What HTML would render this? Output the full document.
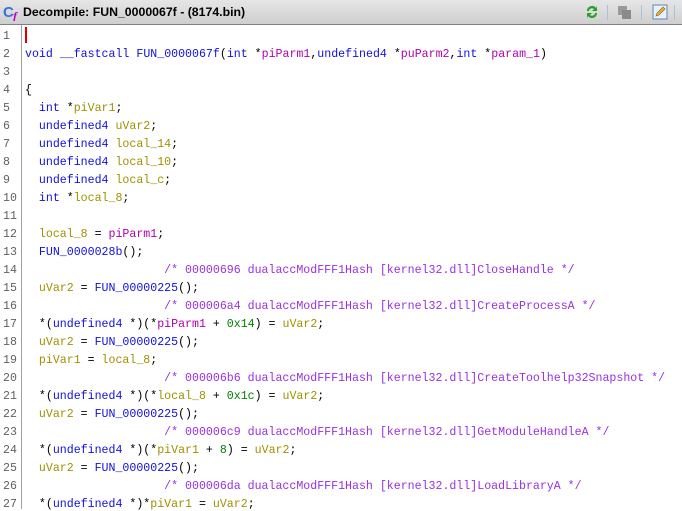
<!DOCTYPE html>
<html><head><meta charset="utf-8"><style>
html,body{margin:0;padding:0;width:682px;height:509px;overflow:hidden;background:#fff;font-family:"Liberation Sans",sans-serif}
.hdr{position:absolute;left:0;top:0;width:682px;height:24px;background:linear-gradient(#e6e6e6,#cfcfcf);border-bottom:1px solid #808080}
.ttl{position:absolute;left:23px;top:5px;font-size:12.3px;font-weight:bold;color:#000}
.gut{position:absolute;left:0;top:25px;width:21px;height:484px;border-right:1px solid #a0a0a0;background:#fff}
.ln{position:absolute;left:0;width:21px;font:11.6px "Liberation Mono",monospace;color:#606060;text-align:left;padding-left:3px;box-sizing:border-box}
.code{position:absolute;left:25px;font:11.6px "Liberation Mono",monospace;white-space:pre;color:#000}
.k{color:#1010e0}.f{color:#1010e0}.v{color:#a09000}.p{color:#b000b0}.n{color:#008000}.c{color:#9a30e0}
.sep{position:absolute;top:5px;width:1px;height:15px;background:#a9c0d6}
</style></head><body>
<div class="hdr">
<svg style="position:absolute;left:3px;top:3px" width="18" height="18" viewBox="0 0 18 18"><text x="0" y="14" font-family="Liberation Sans" font-weight="bold" font-size="15" fill="#3a6fe0">C</text><text x="10" y="17" font-family="Liberation Serif" font-style="italic" font-weight="bold" font-size="12" fill="#c000c0">f</text></svg>
<div class="ttl">Decompile: FUN_0000067f -  (8174.bin)</div>
<svg style="position:absolute;left:584px;top:4px" width="16" height="16" viewBox="0 0 16 16"><path d="M3 7a5 5 0 0 1 9-3l1-2v5h-5l2-2a3 3 0 0 0-5 2z" fill="#2aa02a"/><path d="M13 9a5 5 0 0 1-9 3l-1 2V9h5l-2 2a3 3 0 0 0 5-2z" fill="#2aa02a"/></svg>
<div class="sep" style="left:607px"></div>
<svg style="position:absolute;left:617px;top:5px" width="16" height="15"><rect x="1" y="1" width="9" height="9" fill="#9a9a9a"/><rect x="5" y="5" width="9" height="9" fill="#8a8a8a"/></svg>
<div class="sep" style="left:641px"></div>
<svg style="position:absolute;left:652px;top:4px" width="16" height="16"><rect x="1" y="1" width="14" height="14" fill="#e8f0fa" stroke="#5a88c0"/><path d="M4 12l1-3 6-6 2 2-6 6z" fill="#f0b030" stroke="#806020" stroke-width=".6"/></svg>
<div class="sep" style="left:674px"></div>
</div>
<div class="gut"></div>
<div style="position:absolute;left:25px;top:27px;width:2px;height:16px;background:#e00000"></div>
<div id="L"></div>
<script>
var lines=[
'',
'<span class="k">void</span> <span class="k">__fastcall</span> <span class="f">FUN_0000067f</span>(<span class="k">int</span> *<span class="p">piParm1</span>,<span class="k">undefined4</span> *<span class="p">puParm2</span>,<span class="k">int</span> *<span class="p">param_1</span>)',
'',
'{',
'  <span class="k">int</span> *<span class="v">piVar1</span>;',
'  <span class="k">undefined4</span> <span class="v">uVar2</span>;',
'  <span class="k">undefined4</span> <span class="v">local_14</span>;',
'  <span class="k">undefined4</span> <span class="v">local_10</span>;',
'  <span class="k">undefined4</span> <span class="v">local_c</span>;',
'  <span class="k">int</span> *<span class="v">local_8</span>;',
'',
'  <span class="v">local_8</span> = <span class="p">piParm1</span>;',
'  <span class="f">FUN_0000028b</span>();',
'                    <span class="c">/* 00000696 dualaccModFFF1Hash [kernel32.dll]CloseHandle */</span>',
'  <span class="v">uVar2</span> = <span class="f">FUN_00000225</span>();',
'                    <span class="c">/* 000006a4 dualaccModFFF1Hash [kernel32.dll]CreateProcessA */</span>',
'  *(<span class="k">undefined4</span> *)(*<span class="p">piParm1</span> + <span class="n">0x14</span>) = <span class="v">uVar2</span>;',
'  <span class="v">uVar2</span> = <span class="f">FUN_00000225</span>();',
'  <span class="v">piVar1</span> = <span class="v">local_8</span>;',
'                    <span class="c">/* 000006b6 dualaccModFFF1Hash [kernel32.dll]CreateToolhelp32Snapshot */</span>',
'  *(<span class="k">undefined4</span> *)(*<span class="v">local_8</span> + <span class="n">0x1c</span>) = <span class="v">uVar2</span>;',
'  <span class="v">uVar2</span> = <span class="f">FUN_00000225</span>();',
'                    <span class="c">/* 000006c9 dualaccModFFF1Hash [kernel32.dll]GetModuleHandleA */</span>',
'  *(<span class="k">undefined4</span> *)(*<span class="v">piVar1</span> + <span class="n">8</span>) = <span class="v">uVar2</span>;',
'  <span class="v">uVar2</span> = <span class="f">FUN_00000225</span>();',
'                    <span class="c">/* 000006da dualaccModFFF1Hash [kernel32.dll]LoadLibraryA */</span>',
'  *(<span class="k">undefined4</span> *)*<span class="v">piVar1</span> = <span class="v">uVar2</span>;'
];
var h='';
for(var i=0;i<lines.length;i++){var t=30+18*i;
h+='<div class="ln" style="top:'+t+'px">'+(i+1)+'</div><div class="code" style="top:'+t+'px">'+lines[i]+'</div>';}
document.getElementById('L').innerHTML=h;
</script>
</body></html>
